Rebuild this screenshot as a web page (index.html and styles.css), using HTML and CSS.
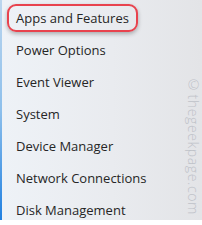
FILE: index.html
```html
<!DOCTYPE html>
<html>
<head>
<meta charset="utf-8">
<link rel="stylesheet" href="styles.css">
</head>
<body>
<div class="menu">
  <ul class="items">
    <li class="item first"><span class="hl"></span>Apps and Features</li>
    <li class="item">Power Options</li>
    <li class="item">Event Viewer</li>
    <li class="item">System</li>
    <li class="item">Device Manager</li>
    <li class="item">Network Connections</li>
    <li class="item">Disk Management</li>
  </ul>
  <div class="wm">©thegeekpage.com</div>
</div>
</body>
</html>
```
FILE: styles.css
```css
html, body {
  margin: 0;
  padding: 0;
  background: #ffffff;
}
.menu {
  position: relative;
  width: 202px;
  height: 220px;
  box-sizing: border-box;
  border-left: 2px solid #7fb6e6;
  border-image: linear-gradient(to bottom, #bcd6ee 0%, #8ec0ec 50%, #1f7fe0 100%) 1;
  background: linear-gradient(to right, #eef2f7 0%, #e9ebef 55%, #e3e4e7 100%);
  overflow: hidden;
  font-family: "Open Sans", "Noto Sans", sans-serif;
  color: #262626;
}
.items {
  list-style: none;
  margin: 0;
  padding: 2px 0 0 14px;
}
.item {
  position: relative;
  height: 32px;
  line-height: 32px;
  font-size: 13px;
  white-space: nowrap;
}
.hl {
  position: absolute;
  left: -9px;
  top: 2px;
  width: 131px;
  height: 28px;
  box-sizing: border-box;
  border: 2px solid #e8434e;
  border-radius: 9px;
  box-shadow: 0 2px 4px rgba(0,0,0,0.28);
}
.wm {
  position: absolute;
  left: 184px;
  top: 75px;
  writing-mode: vertical-rl;
  font-size: 14px;
  letter-spacing: 0.6px;
  font-weight: 300;
  color: #bfc2c8;
  font-family: "Open Sans", "Noto Sans", sans-serif;
  line-height: 15px;
}
```
